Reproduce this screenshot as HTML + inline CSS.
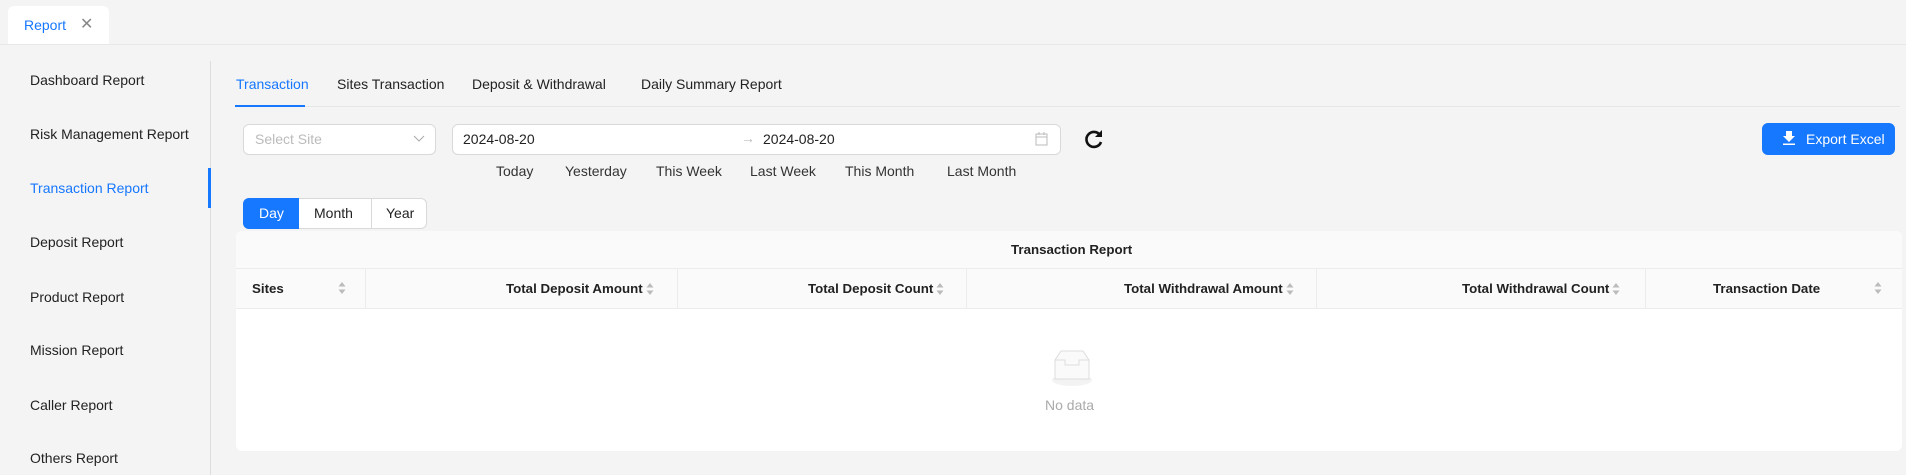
<!DOCTYPE html>
<html><head><meta charset="utf-8">
<style>
*{box-sizing:border-box;margin:0;padding:0}
body{width:1906px;height:475px;background:#f4f4f4;font-family:"Liberation Sans",sans-serif;font-size:14px;color:#222;position:relative;overflow:hidden}
.a{position:absolute;white-space:nowrap}
.tab{left:8px;top:6px;width:101px;height:39px;background:#fff;border-radius:6px 6px 0 0}
.menu{left:30px;font-size:14px;color:#222}
.ct{top:76px;font-size:14px}
.sort{display:inline-block;width:8px;vertical-align:middle;margin-left:3px}
.th{top:281px;font-weight:bold;font-size:13.3px;color:#222}
.vl{position:absolute;top:268px;width:1px;height:40px;background:#ececec}
.ql{top:163px;font-size:14px;color:#333}
</style></head><body>
<div class="a tab"></div>
<div class="a" style="left:24px;top:17px;color:#1677ff;font-size:14px">Report</div>
<div class="a" style="left:80px;top:14px;color:#888;font-size:16px">✕</div>
<div class="a" style="left:0;top:44px;width:1906px;height:1px;background:#e8e8e8"></div>

<div class="a" style="left:210px;top:61px;width:1px;height:414px;background:#ddd"></div>
<div class="a" style="left:208px;top:168px;width:3px;height:40px;background:#1677ff"></div>
<div class="a menu" style="top:72px">Dashboard Report</div>
<div class="a menu" style="top:126px">Risk Management Report</div>
<div class="a menu" style="top:180px;color:#1677ff">Transaction Report</div>
<div class="a menu" style="top:234px">Deposit Report</div>
<div class="a menu" style="top:289px">Product Report</div>
<div class="a menu" style="top:342px">Mission Report</div>
<div class="a menu" style="top:397px">Caller Report</div>
<div class="a menu" style="top:450px">Others Report</div>

<div class="a ct" style="left:236px;color:#1677ff">Transaction</div>
<div class="a ct" style="left:337px">Sites Transaction</div>
<div class="a ct" style="left:472px">Deposit &amp; Withdrawal</div>
<div class="a ct" style="left:641px">Daily Summary Report</div>
<div class="a" style="left:235px;top:106px;width:1665px;height:1px;background:#e6e6e6"></div>
<div class="a" style="left:235px;top:105px;width:70px;height:2px;background:#1677ff"></div>

<div class="a" style="left:243px;top:124px;width:193px;height:31px;background:#fff;border:1px solid #d9d9d9;border-radius:6px"></div>
<div class="a" style="left:255px;top:131px;color:#bbb">Select Site</div>
<svg class="a" style="left:413px;top:134px" width="12" height="10"><path d="M1 2l5 5 5-5" stroke="#aaa" fill="none"/></svg>

<div class="a" style="left:452px;top:124px;width:609px;height:31px;background:#fff;border:1px solid #d9d9d9;border-radius:6px"></div>
<div class="a" style="left:463px;top:131px">2024-08-20</div>
<div class="a" style="left:741px;top:130px;color:#bbb">→</div>
<div class="a" style="left:763px;top:131px">2024-08-20</div>
<svg class="a" style="left:1035px;top:132px" width="13" height="14"><rect x="1" y="2" width="11" height="11" fill="none" stroke="#bbb"/><path d="M1 5h11M4 0v3M9 0v3" stroke="#bbb"/></svg>
<svg class="a" style="left:1083px;top:128px" width="22" height="22" viewBox="0 0 22 22"><path d="M17 7A7.5 7.5 0 1 0 18 14" stroke="#111" stroke-width="2.6" fill="none"/><path d="M19 2v7h-7z" fill="#111"/></svg>

<div class="a ql" style="left:496px">Today</div>
<div class="a ql" style="left:565px">Yesterday</div>
<div class="a ql" style="left:656px">This Week</div>
<div class="a ql" style="left:750px">Last Week</div>
<div class="a ql" style="left:845px">This Month</div>
<div class="a ql" style="left:947px">Last Month</div>

<div class="a" style="left:1762px;top:123px;width:133px;height:32px;background:#1677ff;border-radius:6px"></div>
<svg class="a" style="left:1782px;top:131px" width="14" height="14"><path d="M4 0h6v5h3L7 11 1 5h3z" fill="#fff"/><rect x="1" y="12.5" width="12" height="1.5" fill="#fff"/></svg>
<div class="a" style="left:1806px;top:131px;color:#fff">Export Excel</div>

<div class="a" style="left:243px;top:198px;width:184px;height:31px;background:#fff;border:1px solid #d9d9d9;border-radius:6px"></div>
<div class="a" style="left:243px;top:198px;width:56px;height:31px;background:#1677ff;border-radius:6px 0 0 6px"></div>
<div class="a" style="left:371px;top:199px;width:1px;height:29px;background:#d9d9d9"></div>
<div class="a" style="left:259px;top:205px;color:#fff">Day</div>
<div class="a" style="left:314px;top:205px">Month</div>
<div class="a" style="left:386px;top:205px">Year</div>

<div class="a" style="left:236px;top:231px;width:1666px;height:220px;background:#fff;border-radius:6px"></div>
<div class="a" style="left:236px;top:231px;width:1666px;height:77px;background:#fafafa;border-radius:6px 6px 0 0"></div>
<div class="a" style="left:236px;top:268px;width:1666px;height:1px;background:#ececec"></div>
<div class="a" style="left:236px;top:308px;width:1666px;height:1px;background:#ececec"></div>
<div class="a" style="left:1011px;top:242px;font-weight:bold;font-size:13.3px">Transaction Report</div>
<div class="vl" style="left:365px"></div><div class="vl" style="left:677px"></div><div class="vl" style="left:966px"></div><div class="vl" style="left:1316px"></div><div class="vl" style="left:1645px"></div>
<div class="a th" style="left:252px">Sites</div>
<div class="a th" style="left:338px;top:282px"><svg width="8" height="12"><path d="M4 0l3.5 4.5H.5zM4 12l3.5-4.5H.5z" fill="#bbb"/></svg></div>
<div class="a th" style="left:506px">Total Deposit Amount<svg class="sort" width="8" height="12"><path d="M4 0l3.5 4.5H.5zM4 12l3.5-4.5H.5z" fill="#bbb"/></svg></div>
<div class="a th" style="left:808px">Total Deposit Count<svg class="sort" width="8" height="12"><path d="M4 0l3.5 4.5H.5zM4 12l3.5-4.5H.5z" fill="#bbb"/></svg></div>
<div class="a th" style="left:1124px">Total Withdrawal Amount<svg class="sort" width="8" height="12"><path d="M4 0l3.5 4.5H.5zM4 12l3.5-4.5H.5z" fill="#bbb"/></svg></div>
<div class="a th" style="left:1462px">Total Withdrawal Count<svg class="sort" width="8" height="12"><path d="M4 0l3.5 4.5H.5zM4 12l3.5-4.5H.5z" fill="#bbb"/></svg></div>
<div class="a th" style="left:1713px">Transaction Date</div>
<div class="a th" style="left:1874px;top:282px"><svg width="8" height="12"><path d="M4 0l3.5 4.5H.5zM4 12l3.5-4.5H.5z" fill="#bbb"/></svg></div>

<svg class="a" style="left:1044px;top:346px" width="56" height="42"><ellipse cx="28" cy="34" rx="20" ry="6" fill="#f3f3f3"/><path d="M11 14l6-9h22l6 9v19H11z" fill="#fafafa" stroke="#ddd"/><path d="M11 14h10v5h14v-5h10" fill="none" stroke="#ddd"/></svg>
<div class="a" style="left:1045px;top:397px;color:#aaa">No data</div>
</body></html>
